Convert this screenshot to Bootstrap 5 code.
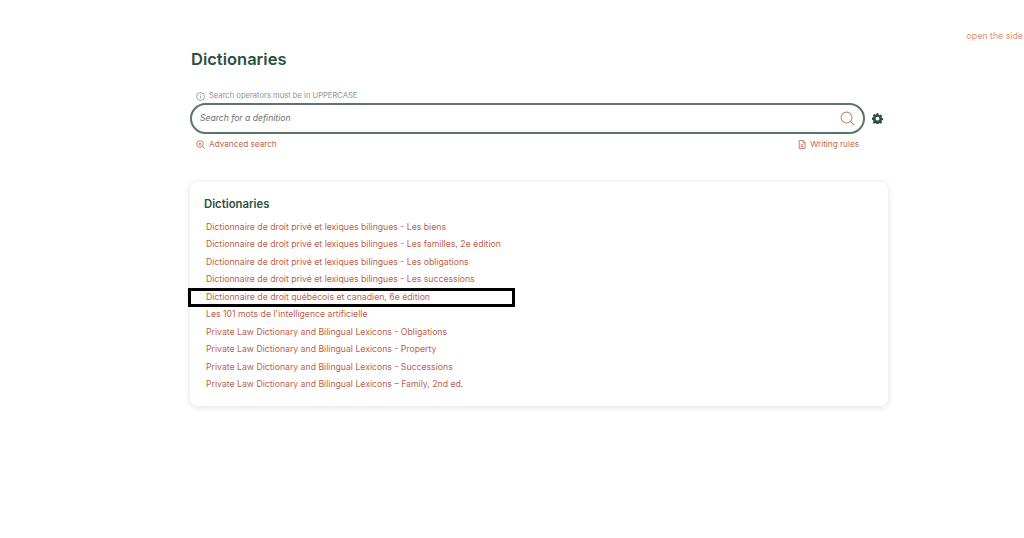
<!DOCTYPE html>
<html lang="en">
<head>
<meta charset="utf-8">
<title>Dictionaries</title>
<link href="https://cdn.jsdelivr.net/npm/bootstrap@5.3.0/dist/css/bootstrap.min.css" rel="stylesheet">
<style>
html,body{height:538px;overflow:hidden;background:#fff;}
body{font-family:Inter,"Liberation Sans",sans-serif;font-size:8.6px;color:#33503f;position:relative;}
.top-hint{height:41px;padding-top:30px;padding-right:1px;text-align:right;white-space:nowrap;color:#e0907a;font-size:8.8px;line-height:11px;width:1024px;}
.page-wrap{margin-left:190px;width:698px;}
.page-title{font-size:16.5px;font-weight:600;color:#2f4f3e;line-height:22px;margin:7px 0 0 1px;}
.op-hint{margin:20px 0 0 6px;height:12px;color:#8f9391;font-size:7.6px;line-height:12px;gap:4px;}
.search-row{margin-top:1px;gap:7px;}
.search-box{width:675px;height:31px;border:2px solid #5c7566;border-radius:16px;padding:0 8px 0 8px;}
.search-box span{font-style:italic;color:#6c6f70;font-size:8.6px;}
.sub-row{width:675px;margin-top:4px;padding:0 6px;height:13px;line-height:13px;}
.sub-link{color:#bf6650;text-decoration:none;font-size:8.2px;gap:4px;}
.dict-card{margin-top:31px;height:224px;border:0;border-radius:8px;box-shadow:0 1px 6px rgba(40,50,45,.16);padding:14px 14px;}
.dict-card h2{font-size:11.3px;font-weight:600;color:#2f4f3e;line-height:16px;margin:0 0 7px;}
.dict-list{margin:0;padding:0 0 0 2px;list-style:none;}
.dict-list li{height:17.45px;line-height:17.45px;}
.dict-list a{color:#bc5f48;text-decoration:none;font-size:8.7px;}
.mark-box{position:absolute;left:188px;top:288px;width:327px;height:19px;border:3px solid #000;}
</style>
</head>
<body>
<div class="top-hint">open the side</div>
<main class="page-wrap">
  <h1 class="page-title">Dictionaries</h1>
  <div class="op-hint d-flex align-items-center">
    <svg width="9" height="9" viewBox="0 0 16 16" fill="none" stroke="#8f9391" stroke-width="1.4"><circle cx="8" cy="8" r="7"/><path d="M8 7v4.5M8 4.2v1.2"/></svg>
    <span>Search operators must be in UPPERCASE</span>
  </div>
  <div class="search-row d-flex align-items-center">
    <div class="search-box d-flex align-items-center justify-content-between">
      <span>Search for a definition</span>
      <svg width="15" height="15" viewBox="0 0 16 16" fill="none" stroke="#c08a6e" stroke-width="1.1"><circle cx="7" cy="7" r="5.8"/><path d="M11.2 11.2 15 15"/></svg>
    </div>
    <svg width="11" height="11" viewBox="0 0 16 16" fill="#2f4f3e"><path fill-rule="evenodd" d="M6.6.5h2.8l.4 2.1 1.3.6 1.8-1.2 2 2-1.2 1.8.6 1.3 2.1.4v2.8l-2.1.4-.6 1.3 1.2 1.8-2 2-1.8-1.2-1.3.6-.4 2.1H6.6l-.4-2.1-1.3-.6-1.8 1.2-2-2 1.2-1.8-.6-1.3L-.4 9.6V6.8l2.1-.4.6-1.3-1.2-1.8 2-2 1.8 1.2 1.3-.6zM8 5.4a2.8 2.8 0 1 0 0 5.6 2.8 2.8 0 0 0 0-5.6z"/></svg>
  </div>
  <div class="sub-row d-flex justify-content-between">
    <a class="sub-link d-flex align-items-center" href="#">
      <svg width="9" height="9" viewBox="0 0 16 16" fill="none" stroke="#bf6650" stroke-width="1.5"><circle cx="7" cy="7" r="5.8"/><path d="M11.2 11.2 15 15M7 4.5v5M4.5 7h5"/></svg>
      Advanced search</a>
    <a class="sub-link d-flex align-items-center" href="#">
      <svg width="8" height="9" viewBox="0 0 14 16" fill="none" stroke="#bf6650" stroke-width="1.5"><path d="M2 1h7l3.5 3.5V15H2zM9 1v4h3.5M4.5 8.5h5M4.5 11.5h5"/></svg>
      Writing rules</a>
  </div>
  <section class="card dict-card">
    <h2>Dictionaries</h2>
    <ul class="dict-list">
      <li><a href="#">Dictionnaire de droit privé et lexiques bilingues - Les biens</a></li>
      <li><a href="#">Dictionnaire de droit privé et lexiques bilingues - Les familles, 2e édition</a></li>
      <li><a href="#">Dictionnaire de droit privé et lexiques bilingues - Les obligations</a></li>
      <li><a href="#">Dictionnaire de droit privé et lexiques bilingues - Les successions</a></li>
      <li><a href="#">Dictionnaire de droit québécois et canadien, 6e édition</a></li>
      <li><a href="#">Les 101 mots de l'intelligence artificielle</a></li>
      <li><a href="#">Private Law Dictionary and Bilingual Lexicons - Obligations</a></li>
      <li><a href="#">Private Law Dictionary and Bilingual Lexicons - Property</a></li>
      <li><a href="#">Private Law Dictionary and Bilingual Lexicons - Successions</a></li>
      <li><a href="#">Private Law Dictionary and Bilingual Lexicons – Family, 2nd ed.</a></li>
    </ul>
  </section>
</main>
<div class="mark-box"></div>
<script src="https://cdn.jsdelivr.net/npm/bootstrap@5.3.0/dist/js/bootstrap.bundle.min.js"></script>
</body>
</html>
